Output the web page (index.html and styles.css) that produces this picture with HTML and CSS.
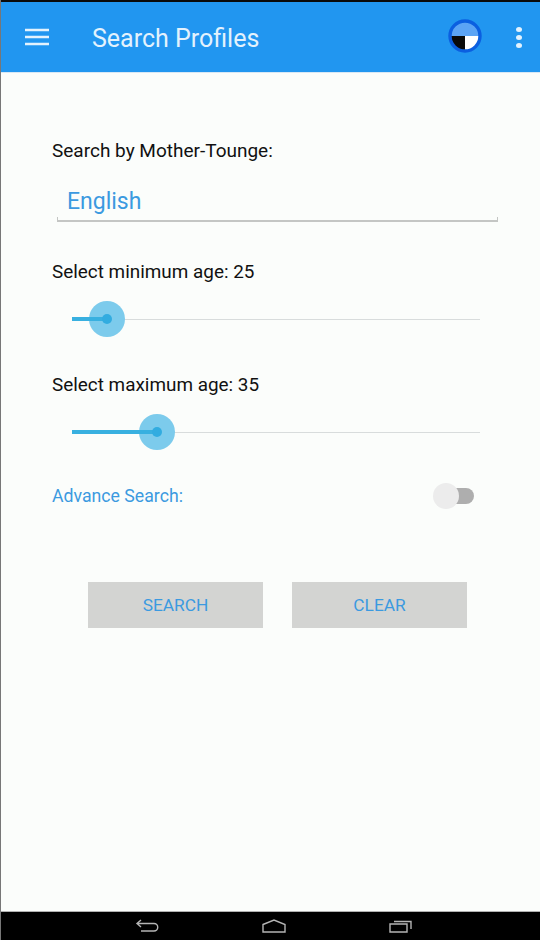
FILE: index.html
```html
<!DOCTYPE html>
<html lang="en">
<head>
    <meta charset="UTF-8" />
    <title>Search Profiles</title>
    <link rel="stylesheet" href="styles.css">
</head>
<body>
    <div class="screen">
        <div class="app-bar">
            <svg class="menu-icon" width="24" height="18" viewBox="0 0 24 18">
                <path d="M0 2h24M0 9h24M0 16h24" stroke="#e3f2fd" stroke-width="2.4" fill="none"/>
            </svg>
            <div class="title">Search Profiles</div>
            <svg class="status-icon" width="34" height="34" viewBox="0 0 34 34">
                <circle cx="17" cy="17" r="15" fill="#5ba4f5"/>
                <path d="M17 17H3a14 14 0 0 0 14 14z" fill="#0a0a0a"/>
                <path d="M17 17h14a14 14 0 0 1-14 14z" fill="#fff"/>
                <circle cx="17" cy="17" r="15" fill="none" stroke="#0b5fe0" stroke-width="3.4"/>
            </svg>
            <div class="more-icon">
                <span></span>
                <span></span>
                <span></span>
            </div>
        </div>

        <div class="content">
            <div class="label">Search by Mother-Tounge:</div>
            <div class="input-box">English</div>

            <div class="label age-label">Select minimum age: 25</div>
            <div class="slider">
                <div class="slider-fill" style="width: 35px">
                    <div class="thumb"></div>
                </div>
            </div>

            <div class="label age-label max-label">Select maximum age: 35</div>
            <div class="slider">
                <div class="slider-fill" style="width: 85px">
                    <div class="thumb"></div>
                </div>
            </div>

            <div class="advance-row">
                <div class="advance-label">Advance Search:</div>
                <div class="switch">
                    <div class="switch-knob"></div>
                </div>
            </div>

            <div class="button-row">
                <button type="button">SEARCH</button>
                <button type="button">CLEAR</button>
            </div>
        </div>

        <div class="nav-bar">
            <svg width="24" height="14" viewBox="0 0 24 14">
                <path d="M6 1 2 4.5 6 8M2 4.5h17a3.6 3.6 0 0 1 0 7.500H6" stroke="#b4b4b4" stroke-width="1.400" fill="none"/>
            </svg>
            <svg width="24" height="14" viewBox="0 0 24 14">
                <path d="M1 5.500 12 1l11 4.500V13H1z" stroke="#b4b4b4" stroke-width="1.400" fill="none"/>
            </svg>
            <svg width="23" height="14" viewBox="0 0 23 14">
                <path d="M1 5h17v8H1zM5 2.500h17V10" stroke="#b4b4b4" stroke-width="1.400" fill="none"/>
            </svg>
        </div>
    </div>
</body>
</html>
```

FILE: styles.css
```css
body {
    margin: 0;
    padding: 0;
    background-color: #fbfdfb;
    font-family: 'Roboto', sans-serif;
}

.screen {
    box-sizing: border-box;
    width: 540px;
    height: 940px;
    display: flex;
    flex-direction: column;
    overflow: hidden;
    border-left: 1px solid #777;
}

/* Top bar */
.app-bar {
    height: 70px;
    flex-shrink: 0;
    display: flex;
    align-items: center;
    background-color: #2196f0;
    border-top: 2px solid #0a0a0a;
    border-bottom: 1px solid #d8e8f5;
    color: #e3f2fd;
}

.menu-icon {
    margin-left: 24px;
}

.title {
    margin: 2px 0 0 43px;
    font-size: 25px;
    flex-grow: 1;
}

.status-icon {
    margin: -2px 34px 0 0;
}

.more-icon {
    width: 6px;
    margin-right: 18px;
    display: flex;
    flex-direction: column;
    gap: 3px;
}

.more-icon span {
    width: 6px;
    height: 5px;
    border-radius: 50%;
    background-color: #e3f2fd;
}

/* Form */
.content {
    flex-grow: 1;
    padding: 66px 0 0 51px;
}

.label {
    font-size: 19px;
    line-height: 24px;
    color: #111;
}

.input-box {
    position: relative;
    width: 431px;
    height: 44px;
    margin: 13px 0 0 5px;
    padding-left: 10px;
    line-height: 52px;
    font-size: 23px;
    color: #3b9ae0;
    border-bottom: 2px solid #c4c6c4;
}

/* little end ticks on the underline */
.input-box::before,
.input-box::after {
    content: "";
    position: absolute;
    bottom: -1px;
    width: 1px;
    height: 4px;
    background-color: #c4c6c4;
}

.input-box::before {
    left: 0;
}

.input-box::after {
    right: 0;
}

.age-label {
    margin-top: 38px;
    font-size: 18.900px;
}

.max-label {
    margin-top: 53px;
}

.slider {
    position: relative;
    width: 408px;
    height: 1px;
    margin: 35px 0 0 20px;
    background-color: #d8dcdc;
}

.slider-fill {
    position: relative;
    height: 4px;
    top: -2px;
    background-color: #38b0e0;
}

.thumb {
    position: absolute;
    right: -18px;
    top: -16px;
    width: 36px;
    height: 36px;
    border-radius: 50%;
    background-color: #7ccbec;
}

/* the fill line carries on across the thumb up to the dot */
.thumb::before {
    content: "";
    position: absolute;
    left: 0;
    top: 16px;
    width: 18px;
    height: 4px;
    background-color: #38b0e0;
}

.thumb::after {
    content: "";
    position: absolute;
    left: 13px;
    top: 13px;
    width: 10px;
    height: 10px;
    border-radius: 50%;
    background-color: #32ace0;
}

.advance-row {
    display: flex;
    align-items: center;
    justify-content: space-between;
    width: 422px;
    margin-top: 51px;
}

.advance-label {
    font-size: 17.700px;
    line-height: 24px;
    color: #3b9ae0;
}

.switch {
    position: relative;
    width: 36px;
    height: 16px;
    border-radius: 8px;
    background-color: #aeaeae;
}

.switch-knob {
    position: absolute;
    left: -5px;
    top: -5px;
    width: 26px;
    height: 26px;
    border-radius: 50%;
    background-color: #ececec;
}

.button-row {
    display: flex;
    gap: 29px;
    margin: 74px 0 0 36px;
}

button {
    width: 175px;
    height: 46px;
    border: none;
    border-radius: 0;
    padding: 0;
    background-color: #d3d4d2;
    color: #3b9ae0;
    font-family: 'Roboto', sans-serif;
    font-size: 17.300px;
}

/* Android nav */
.nav-bar {
    height: 28px;
    flex-shrink: 0;
    display: flex;
    align-items: center;
    justify-content: space-between;
    padding: 0 128px 0 134px;
    background-color: #000;
    border-top: 1px solid #b0b0b0;
}
```
